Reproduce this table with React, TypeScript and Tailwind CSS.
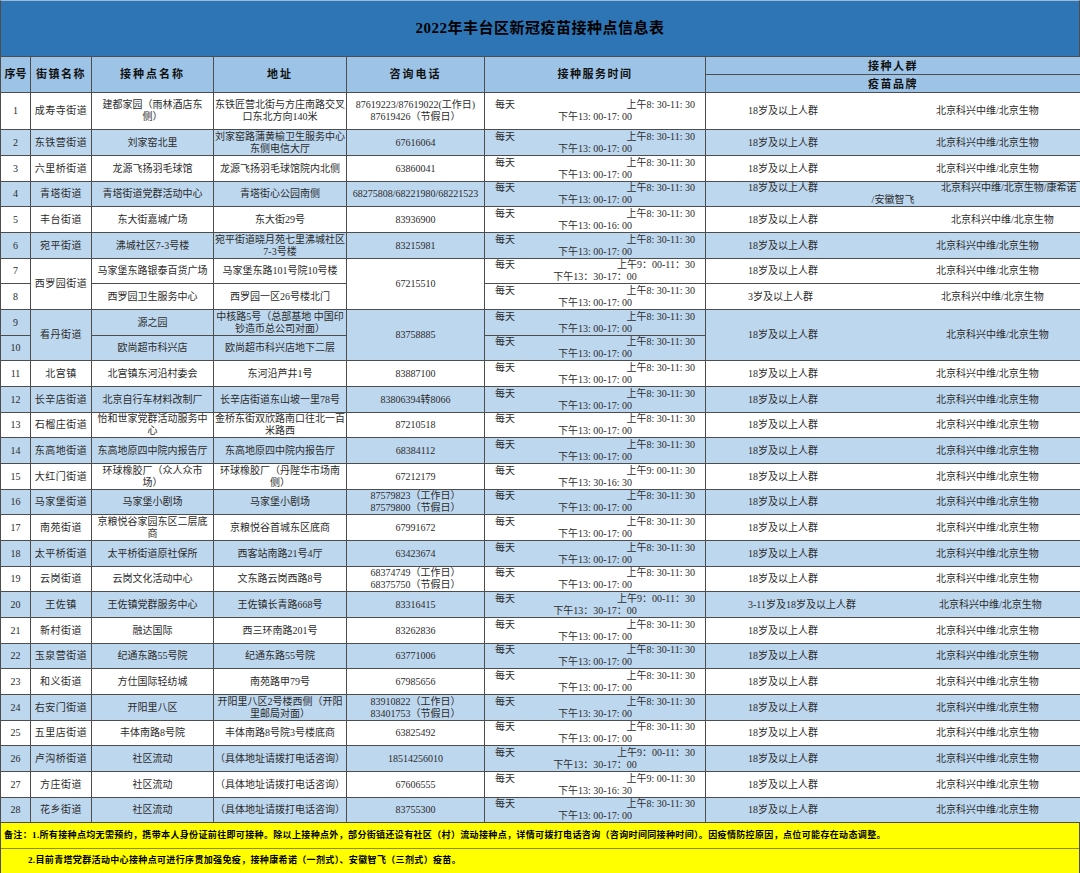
import React from "react";

type Row = {
  n: number;
  street?: string;
  streetSpan?: number;
  site: string;
  addr: string;
  phone?: string;
  phoneSpan?: number;
  am: string;
  pm: string;
  crowd?: string;
  crowdSpan?: number;
  brandPad?: string;
  blue: boolean;
  h: string;
  special?: boolean;
};

const A: [string, string] = ["上午8: 30-11: 30", "下午13: 00-17: 00"];
const F: [string, string] = ["上午9：00-11：30", "下午13：30-17：00"];
const G: [string, string] = ["上午9: 00-11: 30", "下午13: 30-16: 30"];
const H16: [string, string] = ["上午8: 30-11: 30", "下午13: 00-16: 00"];
const H30: [string, string] = ["上午8: 30-11: 30", "下午13: 30-17: 00"];

const C18 = "18岁及以上人群";

const hs = ["h-[26px]", "h-[26px]", "h-[25px]"];

const raw: Omit<Row, "h">[] = [
  { n: 1, street: "成寿寺街道", site: "建都家园（雨林酒店东\n侧）", addr: "东铁匠营北街与方庄南路交叉\n口东北方向140米", phone: "87619223/87619022(工作日)\n87619426（节假日）", am: A[0], pm: A[1], crowd: C18, blue: false },
  { n: 2, street: "东铁营街道", site: "刘家窑北里", addr: "刘家窑路蒲黄榆卫生服务中心\n东侧电信大厅", phone: "67616064", am: A[0], pm: A[1], crowd: C18, blue: true },
  { n: 3, street: "六里桥街道", site: "龙源飞扬羽毛球馆", addr: "龙源飞扬羽毛球馆院内北侧", phone: "63860041", am: A[0], pm: A[1], crowd: C18, blue: false },
  { n: 4, street: "青塔街道", site: "青塔街道党群活动中心", addr: "青塔街心公园南侧", phone: "68275808/68221980/68221523", am: A[0], pm: A[1], crowd: C18, blue: true, special: true },
  { n: 5, street: "丰台街道", site: "东大街嘉城广场", addr: "东大街29号", phone: "83936900", am: H16[0], pm: H16[1], crowd: C18, blue: false, brandPad: "pl-[15px]" },
  { n: 6, street: "宛平街道", site: "沸城社区7-3号楼", addr: "宛平街道晓月苑七里沸城社区\n7-3号楼", phone: "83215981", am: A[0], pm: A[1], crowd: C18, blue: true },
  { n: 7, street: "西罗园街道", streetSpan: 2, site: "马家堡东路银泰百货广场", addr: "马家堡东路101号院10号楼", phone: "67215510", phoneSpan: 2, am: F[0], pm: F[1], crowd: C18, blue: false },
  { n: 8, site: "西罗园卫生服务中心", addr: "西罗园一区26号楼北门", am: A[0], pm: A[1], crowd: "3岁及以上人群", blue: false, brandPad: "pl-[5px]" },
  { n: 9, street: "看丹街道", streetSpan: 2, site: "源之园", addr: "中核路5号（总部基地 中国印\n钞造币总公司对面）", phone: "83758885", phoneSpan: 2, am: A[0], pm: A[1], crowd: C18, crowdSpan: 2, blue: true, brandPad: "pl-[10px]" },
  { n: 10, site: "欧尚超市科兴店", addr: "欧尚超市科兴店地下二层", am: A[0], pm: A[1], blue: true },
  { n: 11, street: "北宫镇", site: "北宫镇东河沿村委会", addr: "东河沿芦井1号", phone: "83887100", am: A[0], pm: A[1], crowd: C18, blue: false },
  { n: 12, street: "长辛店街道", site: "北京自行车材料改制厂", addr: "长辛店街道东山坡一里78号", phone: "83806394转8066", am: A[0], pm: A[1], crowd: C18, blue: true },
  { n: 13, street: "石榴庄街道", site: "怡和世家党群活动服务中\n心", addr: "金桥东街双欣路南口往北一百\n米路西", phone: "87210518", am: A[0], pm: A[1], crowd: C18, blue: false },
  { n: 14, street: "东高地街道", site: "东高地原四中院内报告厅", addr: "东高地原四中院内报告厅", phone: "68384112", am: A[0], pm: A[1], crowd: C18, blue: true },
  { n: 15, street: "大红门街道", site: "环球橡胶厂（众人众市\n场）", addr: "环球橡胶厂（丹陛华市场南\n侧）", phone: "67212179", am: G[0], pm: G[1], crowd: C18, blue: false },
  { n: 16, street: "马家堡街道", site: "马家堡小剧场", addr: "马家堡小剧场", phone: "87579823（工作日）\n87579800（节假日）", am: A[0], pm: A[1], crowd: C18, blue: true },
  { n: 17, street: "南苑街道", site: "京粮悦谷家园东区二层底\n商", addr: "京粮悦谷首城东区底商", phone: "67991672", am: A[0], pm: A[1], crowd: C18, blue: false },
  { n: 18, street: "太平桥街道", site: "太平桥街道原社保所", addr: "西客站南路21号4厅", phone: "63423674", am: A[0], pm: A[1], crowd: C18, blue: true },
  { n: 19, street: "云岗街道", site: "云岗文化活动中心", addr: "文东路云岗西路8号", phone: "68374749（工作日）\n68375750（节假日）", am: A[0], pm: A[1], crowd: C18, blue: false },
  { n: 20, street: "王佐镇", site: "王佐镇党群服务中心", addr: "王佐镇长青路668号", phone: "83316415", am: F[0], pm: F[1], crowd: "3-11岁及18岁及以上人群", blue: true, brandPad: "pl-[3px]" },
  { n: 21, street: "新村街道", site: "融达国际", addr: "西三环南路201号", phone: "83262836", am: A[0], pm: A[1], crowd: C18, blue: false },
  { n: 22, street: "玉泉营街道", site: "纪通东路55号院", addr: "纪通东路55号院", phone: "63771006", am: A[0], pm: A[1], crowd: C18, blue: true },
  { n: 23, street: "和义街道", site: "方仕国际轻纺城", addr: "南苑路甲79号", phone: "67985656", am: A[0], pm: A[1], crowd: C18, blue: false },
  { n: 24, street: "右安门街道", site: "开阳里八区", addr: "开阳里八区2号楼西侧（开阳\n里邮局对面）", phone: "83910822（工作日）\n83401753（节假日）", am: H30[0], pm: H30[1], crowd: C18, blue: true },
  { n: 25, street: "五里店街道", site: "丰体南路8号院", addr: "丰体南路8号院3号楼底商", phone: "63825492", am: A[0], pm: A[1], crowd: C18, blue: false },
  { n: 26, street: "卢沟桥街道", site: "社区流动", addr: "（具体地址请拨打电话咨询）", phone: "18514256010", am: F[0], pm: F[1], crowd: C18, blue: true },
  { n: 27, street: "方庄街道", site: "社区流动", addr: "（具体地址请拨打电话咨询）", phone: "67606555", am: G[0], pm: G[1], crowd: C18, blue: false },
  { n: 28, street: "花乡街道", site: "社区流动", addr: "（具体地址请拨打电话咨询）", phone: "83755300", am: A[0], pm: A[1], crowd: C18, blue: true },
];

const rows: Row[] = raw.map((r, i) => ({ ...r, h: i === 0 ? "h-[37px]" : hs[(i - 1) % 3] }));

const cell = "border border-[#4d4d4d] p-0 text-center align-middle whitespace-pre-line leading-[12px]";

function TimeCell({ am, pm }: { am: string; pm: string }) {
  return (
    <td className={cell}>
      <div className="flex justify-between pl-[10px] pr-[10px] leading-[12px]">
        <span>每天</span>
        <span>{am}</span>
      </div>
      <div className="text-center leading-[12px]">{pm}</div>
    </td>
  );
}

function CrowdCell({ r }: { r: Row }) {
  if (r.special) {
    return (
      <td className={cell}>
        <div className="grid grid-cols-[235px_1fr] text-left leading-[12px]">
          <span className="pl-[42px]">{r.crowd}</span>
          <span className="whitespace-nowrap">北京科兴中维/北京生物/康希诺</span>
        </div>
        <div className="text-center leading-[12px]">/安徽智飞</div>
      </td>
    );
  }
  return (
    <td className={cell} rowSpan={r.crowdSpan}>
      <div className="grid grid-cols-[230px_1fr] text-left">
        <span className="pl-[42px] whitespace-nowrap">{r.crowd}</span>
        <span className={`whitespace-nowrap ${r.brandPad ?? ""}`}>北京科兴中维/北京生物</span>
      </div>
    </td>
  );
}

export default function App() {
  return (
    <div className="w-[1080px] h-[873px] bg-white overflow-hidden font-['Liberation_Serif','Noto_Sans_CJK_SC',serif] text-[#2b2b2b]">
      <div className="h-[56px] bg-[#2e75b6] border-t border-[#9bb9d9] border-x border-x-[#4d4d4d] flex items-center justify-center">
        <h1 className="text-[15px] font-bold text-black tracking-[0.5px]">2022年丰台区新冠疫苗接种点信息表</h1>
      </div>
      <table className="table-fixed border-collapse w-[1080px] text-[10px]">
        <colgroup>
          <col className="w-[30px]" />
          <col className="w-[61px]" />
          <col className="w-[122px]" />
          <col className="w-[133px]" />
          <col className="w-[138px]" />
          <col className="w-[221px]" />
          <col className="w-[375px]" />
        </colgroup>
        <thead className="bg-[#9dc3e6] text-[11px] font-bold text-[#111] tracking-[1.5px]">
          <tr className="h-[18px]">
            <th rowSpan={2} className="border border-[#4d4d4d] p-0 font-bold tracking-[0px]">序号</th>
            <th rowSpan={2} className="border border-[#4d4d4d] p-0 font-bold">街镇名称</th>
            <th rowSpan={2} className="border border-[#4d4d4d] p-0 font-bold tracking-[2px]">接种点名称</th>
            <th rowSpan={2} className="border border-[#4d4d4d] p-0 font-bold tracking-[2px]">地址</th>
            <th rowSpan={2} className="border border-[#4d4d4d] p-0 font-bold tracking-[2px]">咨询电话</th>
            <th rowSpan={2} className="border border-[#4d4d4d] p-0 font-bold">接种服务时间</th>
            <th className="border border-[#4d4d4d] p-0 font-bold leading-[16px]">接种人群</th>
          </tr>
          <tr className="h-[18px]">
            <th className="border border-[#4d4d4d] p-0 font-bold leading-[16px]">疫苗品牌</th>
          </tr>
        </thead>
        <tbody>
          {rows.map((r) => (
            <tr key={r.n} className={`${r.h} ${r.blue ? "bg-[#bdd7ee]" : "bg-white"}`}>
              <td className={cell}>{r.n}</td>
              {r.street !== undefined && (
                <td className={`${cell} tracking-[0.5px]`} rowSpan={r.streetSpan}>{r.street}</td>
              )}
              <td className={cell}>{r.site}</td>
              <td className={cell}>{r.addr}</td>
              {r.phone !== undefined && (
                <td className={cell} rowSpan={r.phoneSpan}>{r.phone}</td>
              )}
              <TimeCell am={r.am} pm={r.pm} />
              {r.crowd !== undefined && <CrowdCell r={r} />}
            </tr>
          ))}
        </tbody>
      </table>
      <div className="bg-[#ffff00] border-x border-[#4d4d4d] text-[9px] font-bold text-black tracking-[0.35px]">
        <div className="h-[26px] flex items-center pl-[3px] border-b border-[#8c8c1a] whitespace-nowrap">
          备注：1.所有接种点均无需预约，携带本人身份证前往即可接种。除以上接种点外，部分街镇还设有社区（村）流动接种点，详情可拨打电话咨询（咨询时间同接种时间）。因疫情防控原因，点位可能存在动态调整。
        </div>
        <div className="h-[25px] flex items-center pl-[27px] border-b border-[#8c8c1a] whitespace-nowrap">
          2.目前青塔党群活动中心接种点可进行序贯加强免疫，接种康希诺（一剂式）、安徽智飞（三剂式）疫苗。
        </div>
      </div>
    </div>
  );
}
